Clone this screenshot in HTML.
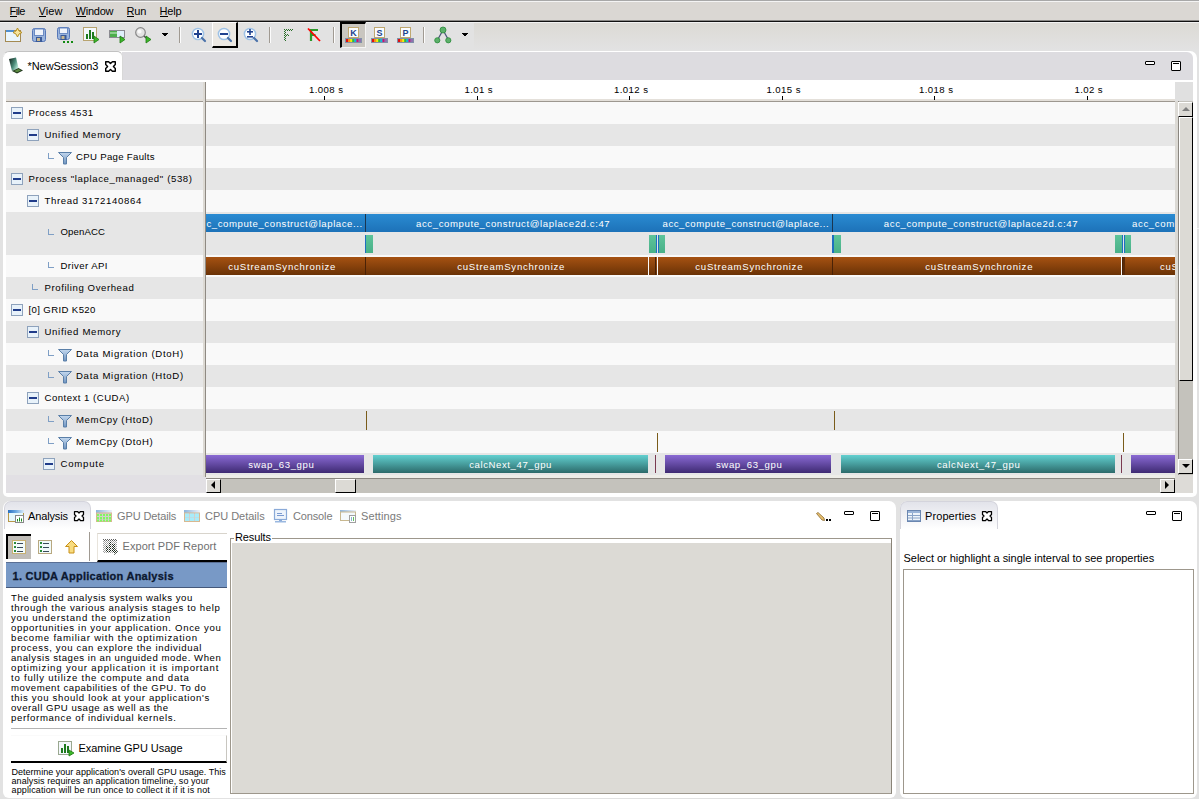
<!DOCTYPE html><html><head><meta charset="utf-8"><title>NVIDIA Visual Profiler</title><style>
*{margin:0;padding:0;box-sizing:border-box}
html,body{width:1199px;height:799px;overflow:hidden;background:#e2e2e2;font-family:"Liberation Sans",sans-serif;font-size:11px;color:#000}
div{position:absolute}
.t{white-space:pre;line-height:20px;height:20px}
svg{position:absolute;overflow:visible}
</style></head><body>
<div style="left:0px;top:0px;width:1199px;height:21px;background:#dad7d3"></div>
<div style="left:0px;top:0px;width:1199px;height:1px;background:#a8a8a8"></div>
<div style="left:0px;top:1px;width:1199px;height:1px;background:#f4f4f4"></div>
<div style="left:0px;top:20px;width:1199px;height:1px;background:#8a8886"></div>
<div style="left:0px;top:21px;width:1199px;height:1px;background:#111"></div>
<div class="t" style="left:9.50px;top:1px;font-size:11px;font-weight:400;letter-spacing:-0.578px;color:#000;">File</div>
<div class="t" style="left:38.50px;top:1px;font-size:11px;font-weight:400;letter-spacing:0.115px;color:#000;">View</div>
<div class="t" style="left:75.50px;top:1px;font-size:11px;font-weight:400;letter-spacing:-0.225px;color:#000;">Window</div>
<div class="t" style="left:126.50px;top:1px;font-size:11px;font-weight:400;letter-spacing:-0.094px;color:#000;">Run</div>
<div class="t" style="left:159.50px;top:1px;font-size:11px;font-weight:400;letter-spacing:-0.208px;color:#000;">Help</div>
<div style="left:10px;top:16px;width:7px;height:1px;background:#000"></div>
<div style="left:39px;top:16px;width:7px;height:1px;background:#000"></div>
<div style="left:76px;top:16px;width:10px;height:1px;background:#000"></div>
<div style="left:127px;top:16px;width:7px;height:1px;background:#000"></div>
<div style="left:160px;top:16px;width:8px;height:1px;background:#000"></div>
<div style="left:0px;top:22px;width:1199px;height:1px;background:#f2f2f2"></div>
<div style="left:0px;top:23px;width:1199px;height:27px;background:#e2e2e2"></div>
<div style="left:474px;top:23px;width:725px;height:27px;background:linear-gradient(#dcdad5,#e2e2e2)"></div>
<svg style="left:5px;top:28px;" width="17" height="15" viewBox="0 0 17 15">
<rect x="0.5" y="2.5" width="15" height="11" fill="#eaf6fc" stroke="#a48a52"/>
<rect x="1" y="2" width="8" height="2" fill="#4f8fd0"/>
<path d="M12.5 0 L14 3 L17 4.5 L14 6 L12.5 9 L11 6 L8 4.5 L11 3 Z" fill="#f6e6a0" stroke="#b89020" stroke-width="1"/>
</svg>
<svg style="left:32px;top:28px;" width="15" height="15" viewBox="0 0 15 15">
<rect x="0.5" y="0.5" width="13" height="13" rx="2" fill="#9ab4dc" stroke="#5577b8"/>
<rect x="2.5" y="1" width="9" height="6.5" fill="#f0f4fb" stroke="#6d8cc4"/>
<rect x="4" y="9" width="6" height="5" fill="#3a5a98"/>
<rect x="5" y="10" width="3" height="3" fill="#c8b890"/>
</svg>
<svg style="left:57px;top:27px;" width="17" height="17" viewBox="0 0 17 17">
<rect x="0.5" y="0.5" width="12" height="12" rx="2" fill="#9ab4dc" stroke="#5577b8"/>
<rect x="2.5" y="1" width="8" height="5.5" fill="#f0f4fb" stroke="#6d8cc4"/>
<rect x="3.5" y="8" width="6" height="5" fill="#3a5a98"/>
<rect x="4.5" y="9" width="3" height="3" fill="#c8b890"/>
<rect x="6" y="14" width="2" height="2" fill="#138a13"/><rect x="10" y="14" width="2" height="2" fill="#138a13"/><rect x="14" y="14" width="2" height="2" fill="#138a13"/>
</svg>
<svg style="left:83px;top:27px;" width="17" height="17" viewBox="0 0 17 17">
<rect x="0.5" y="0.5" width="13" height="13" fill="#f4f8fc" stroke="#b8a470"/>
<rect x="3" y="7" width="2" height="5" fill="#1e7a1e"/><rect x="6" y="3" width="2" height="9" fill="#1e7a1e"/><rect x="9" y="5" width="2" height="7" fill="#1e7a1e"/>
<path d="M11 9 L16 12.5 L11 16 Z" fill="#3cb82a" stroke="#1f7a12" stroke-width="0.8"/></svg>
<svg style="left:109px;top:30px;" width="17" height="14" viewBox="0 0 17 14">
<rect x="0.5" y="0.5" width="15" height="7" fill="#dff0fa" stroke="#8a8a90"/>
<rect x="1" y="1" width="7" height="6" fill="#4cae4c"/>
<rect x="1" y="2" width="7" height="2" fill="#8fd08f"/>
<path d="M11 6 L16 9.5 L11 13 Z" fill="#3cb82a" stroke="#1f7a12" stroke-width="0.8"/></svg>
<svg style="left:135px;top:27px;" width="17" height="17" viewBox="0 0 17 17">
<circle cx="5.5" cy="5.5" r="4.8" fill="#e4e4e4" stroke="#888" stroke-width="1.2"/>
<circle cx="4.5" cy="4.5" r="2" fill="#fafafa"/>
<path d="M9 9 L11 11" stroke="#555" stroke-width="1.5"/>
<path d="M11 9 L16 12.5 L11 16 Z" fill="#3cb82a" stroke="#1f7a12" stroke-width="0.8"/></svg>
<div style="left:162px;top:33px;width:6px;height:1px;background:#000"></div>
<div style="left:163px;top:34px;width:4px;height:1px;background:#000"></div>
<div style="left:164px;top:35px;width:2px;height:1px;background:#000"></div>
<div style="left:179px;top:27px;width:1px;height:16px;background:#a09a92"></div>
<div style="left:180px;top:27px;width:1px;height:16px;background:#fcfcfc"></div>
<svg style="left:191px;top:27px;" width="16" height="16" viewBox="0 0 16 16"><circle cx="7" cy="7" r="5.6" fill="#fdfeff" stroke="#9ec2e6" stroke-width="1.5"/><path d="M11 11 L14 14" stroke="#4a72aa" stroke-width="2.2" stroke-linecap="round"/><rect x="3" y="6" width="8" height="2" fill="#1f4290"/><rect x="6" y="3" width="2" height="8" fill="#1f4290"/></svg>
<div style="left:212px;top:22px;width:26px;height:26px;background:#ebe8e3;border-top:1px solid #fff;border-left:1px solid #fff;border-right:2px solid #000;border-bottom:2px solid #000"></div>
<svg style="left:217px;top:27px;" width="16" height="16" viewBox="0 0 16 16"><circle cx="7" cy="7" r="5.6" fill="#fdfeff" stroke="#9ec2e6" stroke-width="1.5"/><path d="M11 11 L14 14" stroke="#4a72aa" stroke-width="2.2" stroke-linecap="round"/><rect x="3" y="6" width="8" height="2" fill="#1f4290"/></svg>
<svg style="left:243px;top:27px;" width="16" height="16" viewBox="0 0 16 16"><circle cx="7" cy="7" r="5.6" fill="#fdfeff" stroke="#9ec2e6" stroke-width="1.5"/><path d="M11 11 L14 14" stroke="#4a72aa" stroke-width="2.2" stroke-linecap="round"/><rect x="4" y="4" width="6" height="1.6" fill="#1f4290"/><rect x="6.2" y="2" width="1.6" height="6" fill="#1f4290"/><rect x="4" y="9" width="6" height="1.6" fill="#1f4290"/></svg>
<div style="left:269px;top:27px;width:1px;height:16px;background:#a09a92"></div>
<div style="left:270px;top:27px;width:1px;height:16px;background:#fcfcfc"></div>
<svg style="left:283px;top:28px;" width="12" height="14" viewBox="0 0 12 14"><g fill="#2a6e2a"><rect x="1" y="1" width="1" height="1"/><rect x="3" y="1" width="1" height="1"/><rect x="5" y="1" width="1" height="1"/><rect x="7" y="1" width="1" height="1"/><rect x="9" y="1" width="1" height="1"/><rect x="2" y="2" width="1" height="1"/><rect x="4" y="2" width="1" height="1"/><rect x="6" y="2" width="1" height="1"/><rect x="8" y="2" width="1" height="1"/><rect x="1" y="3" width="1" height="1"/><rect x="2" y="4" width="1" height="1"/><rect x="1" y="5" width="1" height="1"/><rect x="2" y="6" width="1" height="1"/><rect x="4" y="6" width="1" height="1"/><rect x="1" y="7" width="1" height="1"/><rect x="3" y="7" width="1" height="1"/><rect x="5" y="7" width="1" height="1"/><rect x="2" y="8" width="1" height="1"/><rect x="1" y="9" width="1" height="1"/><rect x="2" y="10" width="1" height="1"/><rect x="1" y="11" width="1" height="1"/><rect x="2" y="12" width="1" height="1"/></g></svg>
<svg style="left:307px;top:28px;" width="14" height="14" viewBox="0 0 14 14">
<path d="M4 13 V2 H11 M4 7 H8.5" stroke="#2a9a2a" stroke-width="2.2" fill="none"/>
<path d="M1 0.5 L13 13" stroke="#ff0000" stroke-width="1.8"/>
</svg>
<div style="left:333px;top:27px;width:1px;height:16px;background:#a09a92"></div>
<div style="left:334px;top:27px;width:1px;height:16px;background:#fcfcfc"></div>
<div style="left:340px;top:22px;width:26px;height:26px;background:#c9c6c0;border-top:2px solid #000;border-left:2px solid #000;border-right:1px solid #f4f4f4;border-bottom:1px solid #f4f4f4"></div>
<svg style="left:345px;top:27px;" width="17" height="16" viewBox="0 0 17 16">
<rect x="3.5" y="0.5" width="10" height="10" fill="#fafcff" stroke="#c0a870"/>
<text x="8.5" y="8.6" font-family="Liberation Sans" font-weight="bold" font-size="9" fill="#23438c" text-anchor="middle">K</text>
<rect x="0.5" y="11.5" width="16" height="4" fill="#7f8fb0" stroke="#8090a8"/>
<rect x="1" y="12" width="2.1" height="3" fill="#e01010"/><rect x="3.1" y="12" width="2.1" height="3" fill="#ff9010"/><rect x="5.2" y="12" width="2.1" height="3" fill="#f8f000"/><rect x="7.3" y="12" width="2.1" height="3" fill="#30c030"/><rect x="9.4" y="12" width="2.1" height="3" fill="#10b8e0"/><rect x="11.5" y="12" width="2.1" height="3" fill="#d01070"/><rect x="13.6" y="12" width="2.4" height="3" fill="#9070b0"/>
</svg>
<svg style="left:371px;top:27px;" width="17" height="16" viewBox="0 0 17 16">
<rect x="3.5" y="0.5" width="10" height="10" fill="#fafcff" stroke="#c0a870"/>
<text x="8.5" y="8.6" font-family="Liberation Sans" font-weight="bold" font-size="9" fill="#23438c" text-anchor="middle">S</text>
<rect x="0.5" y="11.5" width="16" height="4" fill="#7f8fb0" stroke="#8090a8"/>
<rect x="1" y="12" width="2.1" height="3" fill="#e01010"/><rect x="3.1" y="12" width="2.1" height="3" fill="#ff9010"/><rect x="5.2" y="12" width="2.1" height="3" fill="#f8f000"/><rect x="7.3" y="12" width="2.1" height="3" fill="#30c030"/><rect x="9.4" y="12" width="2.1" height="3" fill="#10b8e0"/><rect x="11.5" y="12" width="2.1" height="3" fill="#d01070"/><rect x="13.6" y="12" width="2.4" height="3" fill="#9070b0"/>
</svg>
<svg style="left:397px;top:27px;" width="17" height="16" viewBox="0 0 17 16">
<rect x="3.5" y="0.5" width="10" height="10" fill="#fafcff" stroke="#c0a870"/>
<text x="8.5" y="8.6" font-family="Liberation Sans" font-weight="bold" font-size="9" fill="#23438c" text-anchor="middle">P</text>
<rect x="0.5" y="11.5" width="16" height="4" fill="#7f8fb0" stroke="#8090a8"/>
<rect x="1" y="12" width="2.1" height="3" fill="#e01010"/><rect x="3.1" y="12" width="2.1" height="3" fill="#ff9010"/><rect x="5.2" y="12" width="2.1" height="3" fill="#f8f000"/><rect x="7.3" y="12" width="2.1" height="3" fill="#30c030"/><rect x="9.4" y="12" width="2.1" height="3" fill="#10b8e0"/><rect x="11.5" y="12" width="2.1" height="3" fill="#d01070"/><rect x="13.6" y="12" width="2.4" height="3" fill="#9070b0"/>
</svg>
<div style="left:423px;top:27px;width:1px;height:16px;background:#a09a92"></div>
<div style="left:424px;top:27px;width:1px;height:16px;background:#fcfcfc"></div>
<svg style="left:434px;top:26px;" width="18" height="18" viewBox="0 0 18 18">
<path d="M9 4 L3.5 14 M9 4 L14.5 14" stroke="#4a5a78" stroke-width="1.3"/>
<circle cx="9" cy="4" r="3" fill="#5cb06a" stroke="#2a8a3a" stroke-width="0.8"/>
<circle cx="3.3" cy="14.3" r="2.6" fill="#5cb06a" stroke="#2a8a3a" stroke-width="0.8"/>
<circle cx="14.3" cy="14.3" r="2.6" fill="#5cb06a" stroke="#2a8a3a" stroke-width="0.8"/>
</svg>
<div style="left:462px;top:33px;width:6px;height:1px;background:#000"></div>
<div style="left:463px;top:34px;width:4px;height:1px;background:#000"></div>
<div style="left:464px;top:35px;width:2px;height:1px;background:#000"></div>
<div style="left:3px;top:51px;width:1194px;height:446px;background:#ffffff;border-radius:7px 7px 5px 5px"></div>
<div style="left:122px;top:52px;width:1071px;height:28px;background:#dddce0;border-radius:0 6px 0 0"></div>
<div style="left:3px;top:51px;width:119px;height:6px;border-top:1px solid #c2c2c2;border-left:1px solid #e8e8e8;border-radius:7px 6px 0 0"></div>
<div style="left:116px;top:51px;width:7px;height:29px;background:#fff;border-top:1px solid #c2c2c2;border-right:1px solid #d8d8d8;border-radius:0 6px 0 0"></div>
<svg style="left:8px;top:56px;" width="16" height="18" viewBox="0 0 16 18">
<defs><linearGradient id="lg1" x1="0" y1="0" x2="1" y2="0.6"><stop offset="0" stop-color="#0e1a14"/><stop offset="0.6" stop-color="#4a8a78"/><stop offset="1" stop-color="#b8e8d8"/></linearGradient></defs>
<path d="M1 3 L8 1.5 L10.5 12 L4 15 Z" fill="url(#lg1)"/>
<path d="M4 15 L10.5 12 L15 14.5 L9 17.5 Z" fill="#23381f"/>
<path d="M6 15 L10.5 13 L13 14.5 L9 16.2 Z" fill="#5a8a40"/>
</svg>
<div class="t" style="left:27.50px;top:56px;font-size:11px;font-weight:400;letter-spacing:-0.050px;color:#000;">*NewSession3</div>
<svg style="left:105px;top:61px;" width="11" height="11" viewBox="0 0 11 11"><path d="M0.7 0.7 H3.6 L5.5 2.6 L7.4 0.7 H10.3 V3.6 L8.4 5.5 L10.3 7.4 V10.3 H7.4 L5.5 8.4 L3.6 10.3 H0.7 V7.4 L2.6 5.5 L0.7 3.6 Z" fill="#fff" stroke="#000" stroke-width="1.4" stroke-linejoin="round"/></svg>
<div style="left:1145px;top:61px;width:10px;height:4px;background:#fff;border:1px solid #000;border-radius:1px"></div>
<div style="left:1171px;top:61px;width:10px;height:10px;background:#fff;border:1px solid #000;border-radius:1px"></div>
<div style="left:1173px;top:63px;width:6px;height:1px;background:#000"></div>
<div style="left:6px;top:82px;width:197px;height:19px;background:#e2e2e2"></div>
<div style="left:206px;top:80px;width:969px;height:20px;background:#ffffff"></div>
<div style="left:6px;top:99px;width:1169px;height:2px;background:#e4e0da"></div>
<div style="left:6px;top:101px;width:1169px;height:1px;background:#9d9890"></div>
<div style="left:6px;top:475px;width:200px;height:18px;background:#e2e0e4"></div>
<div style="left:203px;top:82px;width:2px;height:395px;background:#dcd9d3"></div>
<div style="left:205px;top:82px;width:1px;height:395px;background:#8f8a83"></div>
<div class="t" style="left:309.00px;top:80px;font-size:9.6px;font-weight:400;letter-spacing:0.419px;color:#000;">1.008 s</div>
<div style="left:324px;top:96px;width:1px;height:4px;background:#000"></div>
<div class="t" style="left:464.50px;top:80px;font-size:9.6px;font-weight:400;letter-spacing:0.372px;color:#000;">1.01 s</div>
<div style="left:477px;top:96px;width:1px;height:4px;background:#000"></div>
<div class="t" style="left:614.00px;top:80px;font-size:9.6px;font-weight:400;letter-spacing:0.419px;color:#000;">1.012 s</div>
<div style="left:629px;top:96px;width:1px;height:4px;background:#000"></div>
<div class="t" style="left:766.50px;top:80px;font-size:9.6px;font-weight:400;letter-spacing:0.419px;color:#000;">1.015 s</div>
<div style="left:782px;top:96px;width:1px;height:4px;background:#000"></div>
<div class="t" style="left:919.00px;top:80px;font-size:9.6px;font-weight:400;letter-spacing:0.419px;color:#000;">1.018 s</div>
<div style="left:934px;top:96px;width:1px;height:4px;background:#000"></div>
<div class="t" style="left:1074.50px;top:80px;font-size:9.6px;font-weight:400;letter-spacing:0.372px;color:#000;">1.02 s</div>
<div style="left:1087px;top:96px;width:1px;height:4px;background:#000"></div>
<div style="left:6px;top:102px;width:197px;height:22px;background:#f9f9f9"></div>
<div style="left:206px;top:102px;width:969px;height:22px;background:#f9f9f9"></div>
<div style="left:11px;top:107px;width:12px;height:12px;background:#e8f2fa;border:1px solid #8ea2bc"></div>
<div style="left:13px;top:112px;width:8px;height:2px;background:#203c8a"></div>
<div class="t" style="left:28.50px;top:103px;font-size:9.6px;font-weight:400;letter-spacing:0.548px;color:#000;">Process 4531</div>
<div style="left:6px;top:124px;width:197px;height:22px;background:#e6e6e6"></div>
<div style="left:206px;top:124px;width:969px;height:22px;background:#e6e6e6"></div>
<div style="left:27px;top:129px;width:12px;height:12px;background:#e8f2fa;border:1px solid #8ea2bc"></div>
<div style="left:29px;top:134px;width:8px;height:2px;background:#203c8a"></div>
<div class="t" style="left:44.50px;top:125px;font-size:9.6px;font-weight:400;letter-spacing:0.678px;color:#000;">Unified Memory</div>
<div style="left:6px;top:146px;width:197px;height:22px;background:#f9f9f9"></div>
<div style="left:206px;top:146px;width:969px;height:22px;background:#f9f9f9"></div>
<div style="left:48px;top:153px;width:1px;height:6px;background:#7f9fc5"></div>
<div style="left:48px;top:158px;width:6px;height:1px;background:#7f9fc5"></div>
<svg style="left:58px;top:152px;" width="15" height="13" viewBox="0 0 15 13"><defs><linearGradient id="fg" x1="0" y1="0" x2="0" y2="1"><stop offset="0" stop-color="#c4d8ee"/><stop offset="1" stop-color="#6f94c0"/></linearGradient></defs><path d="M0.5 0.5h13l-5 5v6.5h-3v-6.5z" fill="url(#fg)" stroke="#5a7fa8" stroke-width="1"/></svg>
<div class="t" style="left:76.00px;top:147px;font-size:9.6px;font-weight:400;letter-spacing:0.320px;color:#000;">CPU Page Faults</div>
<div style="left:6px;top:168px;width:197px;height:22px;background:#e6e6e6"></div>
<div style="left:206px;top:168px;width:969px;height:22px;background:#e6e6e6"></div>
<div style="left:11px;top:173px;width:12px;height:12px;background:#e8f2fa;border:1px solid #8ea2bc"></div>
<div style="left:13px;top:178px;width:8px;height:2px;background:#203c8a"></div>
<div class="t" style="left:28.50px;top:169px;font-size:9.6px;font-weight:400;letter-spacing:0.619px;color:#000;">Process &quot;laplace_managed&quot; (538)</div>
<div style="left:6px;top:190px;width:197px;height:22px;background:#f9f9f9"></div>
<div style="left:206px;top:190px;width:969px;height:22px;background:#f9f9f9"></div>
<div style="left:27px;top:195px;width:12px;height:12px;background:#e8f2fa;border:1px solid #8ea2bc"></div>
<div style="left:29px;top:200px;width:8px;height:2px;background:#203c8a"></div>
<div class="t" style="left:44.50px;top:191px;font-size:9.6px;font-weight:400;letter-spacing:0.649px;color:#000;">Thread 3172140864</div>
<div style="left:6px;top:212px;width:197px;height:43px;background:#e6e6e6"></div>
<div style="left:206px;top:212px;width:969px;height:43px;background:#e6e6e6"></div>
<div style="left:48px;top:229px;width:1px;height:6px;background:#7f9fc5"></div>
<div style="left:48px;top:234px;width:6px;height:1px;background:#7f9fc5"></div>
<div class="t" style="left:60.50px;top:222px;font-size:9.6px;font-weight:400;letter-spacing:0.111px;color:#000;">OpenACC</div>
<div style="left:6px;top:255px;width:197px;height:22px;background:#f9f9f9"></div>
<div style="left:206px;top:255px;width:969px;height:22px;background:#f9f9f9"></div>
<div style="left:48px;top:262px;width:1px;height:6px;background:#7f9fc5"></div>
<div style="left:48px;top:267px;width:6px;height:1px;background:#7f9fc5"></div>
<div class="t" style="left:60.50px;top:256px;font-size:9.6px;font-weight:400;letter-spacing:0.424px;color:#000;">Driver API</div>
<div style="left:6px;top:277px;width:197px;height:22px;background:#e6e6e6"></div>
<div style="left:206px;top:277px;width:969px;height:22px;background:#e6e6e6"></div>
<div style="left:32px;top:284px;width:1px;height:6px;background:#7f9fc5"></div>
<div style="left:32px;top:289px;width:6px;height:1px;background:#7f9fc5"></div>
<div class="t" style="left:44.50px;top:278px;font-size:9.6px;font-weight:400;letter-spacing:0.578px;color:#000;">Profiling Overhead</div>
<div style="left:6px;top:299px;width:197px;height:22px;background:#f9f9f9"></div>
<div style="left:206px;top:299px;width:969px;height:22px;background:#f9f9f9"></div>
<div style="left:11px;top:304px;width:12px;height:12px;background:#e8f2fa;border:1px solid #8ea2bc"></div>
<div style="left:13px;top:309px;width:8px;height:2px;background:#203c8a"></div>
<div class="t" style="left:28.50px;top:300px;font-size:9.6px;font-weight:400;letter-spacing:0.376px;color:#000;">[0] GRID K520</div>
<div style="left:6px;top:321px;width:197px;height:22px;background:#e6e6e6"></div>
<div style="left:206px;top:321px;width:969px;height:22px;background:#e6e6e6"></div>
<div style="left:27px;top:326px;width:12px;height:12px;background:#e8f2fa;border:1px solid #8ea2bc"></div>
<div style="left:29px;top:331px;width:8px;height:2px;background:#203c8a"></div>
<div class="t" style="left:44.50px;top:322px;font-size:9.6px;font-weight:400;letter-spacing:0.678px;color:#000;">Unified Memory</div>
<div style="left:6px;top:343px;width:197px;height:22px;background:#f9f9f9"></div>
<div style="left:206px;top:343px;width:969px;height:22px;background:#f9f9f9"></div>
<div style="left:48px;top:350px;width:1px;height:6px;background:#7f9fc5"></div>
<div style="left:48px;top:355px;width:6px;height:1px;background:#7f9fc5"></div>
<svg style="left:58px;top:349px;" width="15" height="13" viewBox="0 0 15 13"><defs><linearGradient id="fg" x1="0" y1="0" x2="0" y2="1"><stop offset="0" stop-color="#c4d8ee"/><stop offset="1" stop-color="#6f94c0"/></linearGradient></defs><path d="M0.5 0.5h13l-5 5v6.5h-3v-6.5z" fill="url(#fg)" stroke="#5a7fa8" stroke-width="1"/></svg>
<div class="t" style="left:76.00px;top:344px;font-size:9.6px;font-weight:400;letter-spacing:0.694px;color:#000;">Data Migration (DtoH)</div>
<div style="left:6px;top:365px;width:197px;height:22px;background:#e6e6e6"></div>
<div style="left:206px;top:365px;width:969px;height:22px;background:#e6e6e6"></div>
<div style="left:48px;top:372px;width:1px;height:6px;background:#7f9fc5"></div>
<div style="left:48px;top:377px;width:6px;height:1px;background:#7f9fc5"></div>
<svg style="left:58px;top:371px;" width="15" height="13" viewBox="0 0 15 13"><defs><linearGradient id="fg" x1="0" y1="0" x2="0" y2="1"><stop offset="0" stop-color="#c4d8ee"/><stop offset="1" stop-color="#6f94c0"/></linearGradient></defs><path d="M0.5 0.5h13l-5 5v6.5h-3v-6.5z" fill="url(#fg)" stroke="#5a7fa8" stroke-width="1"/></svg>
<div class="t" style="left:76.00px;top:366px;font-size:9.6px;font-weight:400;letter-spacing:0.694px;color:#000;">Data Migration (HtoD)</div>
<div style="left:6px;top:387px;width:197px;height:22px;background:#f9f9f9"></div>
<div style="left:206px;top:387px;width:969px;height:22px;background:#f9f9f9"></div>
<div style="left:27px;top:392px;width:12px;height:12px;background:#e8f2fa;border:1px solid #8ea2bc"></div>
<div style="left:29px;top:397px;width:8px;height:2px;background:#203c8a"></div>
<div class="t" style="left:44.50px;top:388px;font-size:9.6px;font-weight:400;letter-spacing:0.486px;color:#000;">Context 1 (CUDA)</div>
<div style="left:6px;top:409px;width:197px;height:22px;background:#e6e6e6"></div>
<div style="left:206px;top:409px;width:969px;height:22px;background:#e6e6e6"></div>
<div style="left:48px;top:416px;width:1px;height:6px;background:#7f9fc5"></div>
<div style="left:48px;top:421px;width:6px;height:1px;background:#7f9fc5"></div>
<svg style="left:58px;top:415px;" width="15" height="13" viewBox="0 0 15 13"><defs><linearGradient id="fg" x1="0" y1="0" x2="0" y2="1"><stop offset="0" stop-color="#c4d8ee"/><stop offset="1" stop-color="#6f94c0"/></linearGradient></defs><path d="M0.5 0.5h13l-5 5v6.5h-3v-6.5z" fill="url(#fg)" stroke="#5a7fa8" stroke-width="1"/></svg>
<div class="t" style="left:76.00px;top:410px;font-size:9.6px;font-weight:400;letter-spacing:0.617px;color:#000;">MemCpy (HtoD)</div>
<div style="left:6px;top:431px;width:197px;height:22px;background:#f9f9f9"></div>
<div style="left:206px;top:431px;width:969px;height:22px;background:#f9f9f9"></div>
<div style="left:48px;top:438px;width:1px;height:6px;background:#7f9fc5"></div>
<div style="left:48px;top:443px;width:6px;height:1px;background:#7f9fc5"></div>
<svg style="left:58px;top:437px;" width="15" height="13" viewBox="0 0 15 13"><defs><linearGradient id="fg" x1="0" y1="0" x2="0" y2="1"><stop offset="0" stop-color="#c4d8ee"/><stop offset="1" stop-color="#6f94c0"/></linearGradient></defs><path d="M0.5 0.5h13l-5 5v6.5h-3v-6.5z" fill="url(#fg)" stroke="#5a7fa8" stroke-width="1"/></svg>
<div class="t" style="left:76.00px;top:432px;font-size:9.6px;font-weight:400;letter-spacing:0.617px;color:#000;">MemCpy (DtoH)</div>
<div style="left:6px;top:453px;width:197px;height:22px;background:#e6e6e6"></div>
<div style="left:206px;top:453px;width:969px;height:22px;background:#e6e6e6"></div>
<div style="left:43px;top:458px;width:12px;height:12px;background:#e8f2fa;border:1px solid #8ea2bc"></div>
<div style="left:45px;top:463px;width:8px;height:2px;background:#203c8a"></div>
<div class="t" style="left:60.50px;top:454px;font-size:9.6px;font-weight:400;letter-spacing:0.760px;color:#000;">Compute</div>
<div style="left:206px;top:214px;width:969px;height:18px;background:linear-gradient(#2a8bd2,#1d72b8)"></div>
<div style="left:365px;top:214px;width:1px;height:18px;background:#1a3550"></div>
<div style="left:832px;top:214px;width:1px;height:18px;background:#1a3550"></div>
<div class="t" style="left:206.50px;top:214px;font-size:9.6px;font-weight:400;letter-spacing:0.561px;color:#fff;">c_compute_construct@laplace...</div>
<div class="t" style="left:416.00px;top:214px;font-size:9.6px;font-weight:400;letter-spacing:0.593px;color:#fff;">acc_compute_construct@laplace2d.c:47</div>
<div class="t" style="left:662.50px;top:214px;font-size:9.6px;font-weight:400;letter-spacing:0.540px;color:#fff;">acc_compute_construct@laplace...</div>
<div class="t" style="left:883.85px;top:214px;font-size:9.6px;font-weight:400;letter-spacing:0.593px;color:#fff;">acc_compute_construct@laplace2d.c:47</div>
<div class="t" style="left:1132.00px;top:214px;font-size:9.6px;font-weight:400;letter-spacing:0.634px;color:#fff;">acc_compute_construct</div>
<div style="left:365px;top:235px;width:8px;height:18px;background:linear-gradient(#5ec49a,#48b088)"></div>
<div style="left:649px;top:235px;width:7px;height:18px;background:linear-gradient(#5ec49a,#48b088)"></div>
<div style="left:659px;top:235px;width:6px;height:18px;background:linear-gradient(#5ec49a,#48b088)"></div>
<div style="left:832px;top:235px;width:9px;height:18px;background:linear-gradient(#5ec49a,#48b088)"></div>
<div style="left:1115px;top:235px;width:8px;height:18px;background:linear-gradient(#5ec49a,#48b088)"></div>
<div style="left:1125px;top:235px;width:6px;height:18px;background:linear-gradient(#5ec49a,#48b088)"></div>
<div style="left:365px;top:235px;width:1px;height:18px;background:#1f6fc0"></div>
<div style="left:656px;top:235px;width:1px;height:18px;background:#1f6fc0"></div>
<div style="left:658px;top:235px;width:1px;height:18px;background:#1f6fc0"></div>
<div style="left:832px;top:235px;width:2px;height:18px;background:#1f6fc0"></div>
<div style="left:1122px;top:235px;width:1px;height:18px;background:#1f6fc0"></div>
<div style="left:1124px;top:235px;width:1px;height:18px;background:#1f6fc0"></div>
<div style="left:206px;top:257px;width:442px;height:18px;background:linear-gradient(#a65212,#6a3206)"></div>
<div style="left:649px;top:257px;width:8px;height:18px;background:linear-gradient(#a65212,#6a3206)"></div>
<div style="left:658px;top:257px;width:463px;height:18px;background:linear-gradient(#a65212,#6a3206)"></div>
<div style="left:1122px;top:257px;width:53px;height:18px;background:linear-gradient(#a65212,#6a3206)"></div>
<div style="left:365px;top:257px;width:1px;height:18px;background:#4a2206"></div>
<div style="left:655px;top:257px;width:1px;height:18px;background:#4a2206"></div>
<div style="left:832px;top:257px;width:1px;height:18px;background:#4a2206"></div>
<div style="left:1122px;top:257px;width:1px;height:18px;background:#4a2206"></div>
<div style="left:1123px;top:257px;width:2px;height:18px;background:#5a2a08"></div>
<div class="t" style="left:228.25px;top:257px;font-size:9.6px;font-weight:400;letter-spacing:0.741px;color:#fff;">cuStreamSynchronize</div>
<div class="t" style="left:457.25px;top:257px;font-size:9.6px;font-weight:400;letter-spacing:0.741px;color:#fff;">cuStreamSynchronize</div>
<div class="t" style="left:695.30px;top:257px;font-size:9.6px;font-weight:400;letter-spacing:0.741px;color:#fff;">cuStreamSynchronize</div>
<div class="t" style="left:925.30px;top:257px;font-size:9.6px;font-weight:400;letter-spacing:0.741px;color:#fff;">cuStreamSynchronize</div>
<div class="t" style="left:1160.00px;top:257px;font-size:9.6px;font-weight:400;letter-spacing:0.741px;color:#fff;">cuStreamSynchronize</div>
<div style="left:366px;top:411px;width:1px;height:19px;background:#7a5c1a"></div>
<div style="left:834px;top:411px;width:1px;height:19px;background:#7a5c1a"></div>
<div style="left:657px;top:433px;width:1px;height:19px;background:#7a5c1a"></div>
<div style="left:1123px;top:433px;width:1px;height:19px;background:#7a5c1a"></div>
<div style="left:206px;top:455px;width:158px;height:18px;background:linear-gradient(#8a6ad4,#3e2a72)"></div>
<div style="left:373px;top:455px;width:275px;height:18px;background:linear-gradient(#62d0d0,#2c6a6a)"></div>
<div style="left:665px;top:455px;width:166px;height:18px;background:linear-gradient(#8a6ad4,#3e2a72)"></div>
<div style="left:841px;top:455px;width:274px;height:18px;background:linear-gradient(#62d0d0,#2c6a6a)"></div>
<div style="left:1131px;top:455px;width:44px;height:18px;background:linear-gradient(#8a6ad4,#3e2a72)"></div>
<div style="left:655px;top:455px;width:1px;height:18px;background:#7a3a50"></div>
<div style="left:1121px;top:455px;width:1px;height:18px;background:#7a3a50"></div>
<div class="t" style="left:248.20px;top:455px;font-size:9.6px;font-weight:400;letter-spacing:0.585px;color:#fff;">swap_63_gpu</div>
<div class="t" style="left:469.15px;top:455px;font-size:9.6px;font-weight:400;letter-spacing:0.583px;color:#fff;">calcNext_47_gpu</div>
<div class="t" style="left:715.95px;top:455px;font-size:9.6px;font-weight:400;letter-spacing:0.615px;color:#fff;">swap_63_gpu</div>
<div class="t" style="left:936.95px;top:455px;font-size:9.6px;font-weight:400;letter-spacing:0.626px;color:#fff;">calcNext_47_gpu</div>
<div style="left:206px;top:475px;width:969px;height:3px;background:#eeede8"></div>
<div style="left:1175px;top:82px;width:18px;height:19px;background:#e0e0e0"></div>
<div style="left:1175px;top:101px;width:3px;height:377px;background:#dcdad5"></div>
<div style="left:1178px;top:101px;width:1px;height:374px;background:#8a8680"></div>
<div style="left:1179px;top:101px;width:14px;height:374px;background:#c4c2bc"></div>
<div style="left:1178px;top:102px;width:15px;height:15px;background:#dcdad5;border-top:1px solid #fff;border-left:1px solid #fff;border-right:1px solid #000;border-bottom:1px solid #000"></div>
<svg style="left:1182px;top:107px;" width="8" height="4" viewBox="0 0 8 4"><path d="M0 4 L4 0 L8 4 Z" fill="#808080"/></svg>
<div style="left:1179px;top:117px;width:14px;height:264px;background:#dcdad5;border-left:1px solid #fff;border-top:1px solid #fff;border-right:1px solid #000;border-bottom:1px solid #000"></div>
<div style="left:1178px;top:459px;width:15px;height:15px;background:#dcdad5;border-top:1px solid #fff;border-left:1px solid #fff;border-right:1px solid #000;border-bottom:1px solid #000"></div>
<svg style="left:1182px;top:464px;" width="8" height="4" viewBox="0 0 8 4"><path d="M0 0 L8 0 L4 4 Z" fill="#000"/></svg>
<div style="left:1175px;top:475px;width:18px;height:18px;background:#dddbd7"></div>
<div style="left:206px;top:478px;width:969px;height:15px;background:#c4c2bc"></div>
<div style="left:206px;top:478px;width:969px;height:1px;background:#8a8680"></div>
<div style="left:206px;top:479px;width:15px;height:14px;background:#dcdad5;border-top:1px solid #fff;border-left:1px solid #fff;border-right:1px solid #000;border-bottom:1px solid #000"></div>
<svg style="left:211px;top:481px;" width="4" height="8" viewBox="0 0 4 8"><path d="M4 0 L0 4 L4 8 Z" fill="#000"/></svg>
<div style="left:335px;top:479px;width:21px;height:14px;background:#dcdad5;border-top:1px solid #fff;border-left:1px solid #fff;border-right:1px solid #000;border-bottom:1px solid #000"></div>
<div style="left:1160px;top:479px;width:15px;height:14px;background:#dcdad5;border-top:1px solid #fff;border-left:1px solid #fff;border-right:1px solid #000;border-bottom:1px solid #000"></div>
<svg style="left:1165px;top:481px;" width="4" height="8" viewBox="0 0 4 8"><path d="M0 0 L4 4 L0 8 Z" fill="#000"/></svg>
<div style="left:3px;top:501px;width:893px;height:297px;background:#fff;border-radius:7px 7px 6px 6px"></div>
<div style="left:4px;top:501px;width:87px;height:28px;background:linear-gradient(#e2e3ea,#ffffff);border-radius:7px 7px 0 0;border:1px solid #d4d4dc;border-bottom:none"></div>
<svg style="left:8px;top:510px;" width="17" height="13" viewBox="0 0 17 13">
<defs><linearGradient id="ab" x1="0" y1="0" x2="1" y2="0"><stop offset="0" stop-color="#2a70c0"/><stop offset="0.5" stop-color="#6aa8e0"/><stop offset="1" stop-color="#dceaf8"/></linearGradient></defs>
<rect x="0.5" y="2.5" width="15" height="9" fill="#e4f8fc" stroke="#b89848"/>
<rect x="0" y="0" width="16" height="3" fill="url(#ab)"/>
<rect x="7.5" y="5.5" width="8" height="7" fill="#fff" stroke="#888"/>
<rect x="9" y="9" width="1" height="2.5" fill="#1e8a1e"/><rect x="11" y="7.5" width="1" height="4" fill="#1e8a1e"/><rect x="13" y="8.5" width="1" height="3" fill="#1e8a1e"/>
</svg>
<div class="t" style="left:28.00px;top:506px;font-size:11px;font-weight:400;letter-spacing:-0.138px;color:#000;">Analysis</div>
<svg style="left:74px;top:511px;" width="10" height="10" viewBox="0 0 10 10"><path d="M0.5 0.5 H3.5 L5 2 L6.5 0.5 H9.5 V3.5 L8 5 L9.5 6.5 V9.5 H6.5 L5 8 L3.5 9.5 H0.5 V6.5 L2 5 L0.5 3.5 Z" fill="#fff" stroke="#000" stroke-width="1.25" stroke-linejoin="round"/></svg>
<svg style="left:96px;top:510px;" width="16" height="12" viewBox="0 0 16 12">
<defs><linearGradient id="tb" x1="0" y1="0" x2="1" y2="0"><stop offset="0" stop-color="#8cb4dc"/><stop offset="1" stop-color="#eef2fa"/></linearGradient></defs>
<rect x="0" y="0" width="16" height="3" fill="url(#tb)"/>
<rect x="0.5" y="3" width="15" height="8.5" fill="#d2d0cc" stroke="#d8b890"/>
<g fill="#80f860"><rect x="1" y="4" width="2" height="2"/><rect x="4" y="4" width="2" height="2"/><rect x="7" y="4" width="2" height="2"/><rect x="10" y="4" width="2" height="2"/><rect x="13" y="4" width="2" height="2"/><rect x="1" y="7" width="2" height="2"/><rect x="4" y="7" width="2" height="2"/><rect x="7" y="7" width="2" height="2"/><rect x="10" y="7" width="2" height="2"/><rect x="13" y="7" width="2" height="2"/><rect x="1" y="9.5" width="2" height="2"/><rect x="4" y="9.5" width="2" height="2"/><rect x="7" y="9.5" width="2" height="2"/><rect x="10" y="9.5" width="2" height="2"/><rect x="13" y="9.5" width="2" height="2"/></g>
</svg>
<div class="t" style="left:117.00px;top:506px;font-size:11px;font-weight:400;letter-spacing:-0.123px;color:#7a7a7a;">GPU Details</div>
<svg style="left:184px;top:510px;" width="16" height="12" viewBox="0 0 16 12">
<rect x="0" y="0" width="16" height="3" fill="url(#tb)"/>
<rect x="0.5" y="3" width="15" height="8.5" fill="#d2d0cc" stroke="#d8b890"/>
<g fill="#a8ecfa"><rect x="1" y="3.5" width="4" height="3.5"/><rect x="6" y="3.5" width="4" height="3.5"/><rect x="11" y="3.5" width="4" height="3.5"/><rect x="1" y="7.5" width="4" height="3.5"/><rect x="6" y="7.5" width="4" height="3.5"/><rect x="11" y="7.5" width="4" height="3.5"/></g>
</svg>
<div class="t" style="left:205.00px;top:506px;font-size:11px;font-weight:400;letter-spacing:-0.021px;color:#7a7a7a;">CPU Details</div>
<svg style="left:274px;top:509px;" width="14" height="14" viewBox="0 0 14 14">
<rect x="0.5" y="0.5" width="12" height="10" fill="#eef4fc" stroke="#8aaad8" stroke-width="1.2"/>
<rect x="3" y="4" width="5" height="1" fill="#7a9ad0"/><rect x="3" y="6" width="7" height="1" fill="#7a9ad0"/>
<rect x="5" y="11" width="3" height="1" fill="#8aaad8"/><rect x="1" y="12" width="11" height="1.5" fill="#9ab8e0"/>
</svg>
<div class="t" style="left:293.00px;top:506px;font-size:11px;font-weight:400;letter-spacing:-0.143px;color:#7a7a7a;">Console</div>
<svg style="left:340px;top:510px;" width="16" height="13" viewBox="0 0 16 13">
<rect x="0" y="0" width="16" height="2" fill="url(#tb)"/>
<rect x="0.5" y="2" width="15" height="8.5" fill="#f4f9fc" stroke="#c8b890"/>
<rect x="9.5" y="5.5" width="6" height="7" fill="#fff" stroke="#a0a0a0"/>
<rect x="11" y="7" width="1" height="4" fill="#8ab0d0"/><rect x="13" y="7" width="1" height="4" fill="#60c060"/>
</svg>
<div class="t" style="left:361.00px;top:506px;font-size:11px;font-weight:400;letter-spacing:0.093px;color:#7a7a7a;">Settings</div>
<svg style="left:816px;top:512px;" width="14" height="9" viewBox="0 0 14 9"><path d="M0.5 1.5 L2 0.5 L8 6 L8.5 8.5 L6 8 Z" fill="#e8c070" stroke="#8a6a30" stroke-width="0.8"/><rect x="10" y="7" width="2" height="2" fill="#000"/><rect x="13" y="7" width="2" height="2" fill="#000"/></svg>
<div style="left:844px;top:511px;width:10px;height:4px;background:#fff;border:1px solid #000;border-radius:1px"></div>
<div style="left:870px;top:511px;width:10px;height:10px;background:#fff;border:1px solid #000;border-radius:1px"></div>
<div style="left:872px;top:513px;width:6px;height:1px;background:#000"></div>
<div style="left:6px;top:534px;width:25px;height:25px;background:#c0bdb8;border-top:2px solid #000;border-left:2px solid #000"></div>
<svg style="left:12px;top:540px;" width="14" height="14" viewBox="0 0 14 14"><rect x="0.5" y="0.5" width="13" height="13" fill="#f2fbfb" stroke="#c8b070"/>
<g fill="#2a8a3a"><rect x="2" y="2" width="2" height="2"/><rect x="2" y="6" width="2" height="2"/><rect x="2" y="10" width="2" height="2"/></g>
<g fill="#3a4a5a"><rect x="5" y="3" width="6" height="1"/><rect x="5" y="7" width="6" height="1"/><rect x="5" y="11" width="6" height="1"/></g></svg>
<svg style="left:38px;top:540px;" width="14" height="14" viewBox="0 0 14 14"><rect x="0.5" y="0.5" width="13" height="13" fill="#f2fbfb" stroke="#b8a880"/>
<g fill="#2a8a3a"><rect x="2" y="2" width="2" height="2"/><rect x="2" y="6" width="2" height="2"/><rect x="2" y="10" width="2" height="2"/></g>
<g fill="#3a4a5a"><rect x="5" y="3" width="6" height="1"/><rect x="5" y="7" width="6" height="1"/><rect x="5" y="11" width="6" height="1"/></g></svg>
<svg style="left:65px;top:540px;" width="13" height="14" viewBox="0 0 13 14"><path d="M6.5 0.5 L12.5 6.5 L9 6.5 L9 13 L4 13 L4 6.5 L0.5 6.5 Z" fill="#f8dc80" stroke="#c89018" stroke-width="1"/></svg>
<div style="left:89px;top:532px;width:1px;height:29px;background:#a09a92"></div>
<div style="left:90px;top:532px;width:1px;height:29px;background:#fff"></div>
<div style="left:97px;top:533px;width:130px;height:29px;background:#fff;border-top:1px solid #d8d4cc;border-left:1px solid #e8e4dc;border-bottom:2px solid #000"></div>
<svg style="left:103px;top:539px;" width="17" height="16" viewBox="0 0 17 16">
<defs><pattern id="chk" width="2" height="2" patternUnits="userSpaceOnUse"><rect x="0" y="0" width="1" height="1" fill="#5a5a5a"/><rect x="1" y="1" width="1" height="1" fill="#5a5a5a"/></pattern>
<pattern id="chk2" width="2" height="2" patternUnits="userSpaceOnUse"><rect x="0" y="0" width="1" height="1" fill="#1e2a1e"/><rect x="1" y="1" width="1" height="1" fill="#1e2a1e"/></pattern></defs>
<rect x="0" y="0" width="14" height="14" fill="url(#chk)" opacity="0.55"/>
<rect x="0" y="0" width="14" height="2" fill="url(#chk)" opacity="0.9"/>
<rect x="3" y="7" width="2" height="6" fill="url(#chk2)"/><rect x="6" y="3" width="2" height="10" fill="url(#chk2)"/><rect x="9" y="5" width="3" height="8" fill="url(#chk2)"/>
<path d="M11 9 L15 12.5 L11 16 Z" fill="url(#chk2)"/>
</svg>
<div class="t" style="left:122.50px;top:536px;font-size:11px;font-weight:400;letter-spacing:0.061px;color:#707070;">Export PDF Report</div>
<div style="left:6px;top:562px;width:221px;height:26px;background:#7899c6;border-top:1px solid #5a6f94;border-bottom:1px solid #44587a"></div>
<div class="t" style="left:12.50px;top:566px;font-size:11px;font-weight:700;letter-spacing:0.258px;color:#0c1830;-webkit-text-stroke:0.3px #0c1830">1. CUDA Application Analysis</div>
<div class="t" style="left:11.00px;top:588px;font-size:9.6px;font-weight:400;letter-spacing:0.518px;color:#000;">The guided analysis system walks you</div>
<div class="t" style="left:11.00px;top:598px;font-size:9.6px;font-weight:400;letter-spacing:0.641px;color:#000;">through the various analysis stages to help</div>
<div class="t" style="left:11.00px;top:608px;font-size:9.6px;font-weight:400;letter-spacing:0.777px;color:#000;">you understand the optimization</div>
<div class="t" style="left:11.00px;top:618px;font-size:9.6px;font-weight:400;letter-spacing:0.678px;color:#000;">opportunities in your application. Once you</div>
<div class="t" style="left:11.00px;top:628px;font-size:9.6px;font-weight:400;letter-spacing:0.797px;color:#000;">become familiar with the optimization</div>
<div class="t" style="left:11.00px;top:638px;font-size:9.6px;font-weight:400;letter-spacing:0.657px;color:#000;">process, you can explore the individual</div>
<div class="t" style="left:11.00px;top:648px;font-size:9.6px;font-weight:400;letter-spacing:0.538px;color:#000;">analysis stages in an unguided mode. When</div>
<div class="t" style="left:11.00px;top:658px;font-size:9.6px;font-weight:400;letter-spacing:0.822px;color:#000;">optimizing your application it is important</div>
<div class="t" style="left:11.00px;top:668px;font-size:9.6px;font-weight:400;letter-spacing:0.761px;color:#000;">to fully utilize the compute and data</div>
<div class="t" style="left:11.00px;top:678px;font-size:9.6px;font-weight:400;letter-spacing:0.556px;color:#000;">movement capabilities of the GPU. To do</div>
<div class="t" style="left:11.00px;top:688px;font-size:9.6px;font-weight:400;letter-spacing:0.655px;color:#000;">this you should look at your application&#x27;s</div>
<div class="t" style="left:11.00px;top:698px;font-size:9.6px;font-weight:400;letter-spacing:0.506px;color:#000;">overall GPU usage as well as the</div>
<div class="t" style="left:11.00px;top:708px;font-size:9.6px;font-weight:400;letter-spacing:0.647px;color:#000;">performance of individual kernels.</div>
<div style="left:11px;top:728px;width:216px;height:1px;background:#b4b4b4"></div>
<div style="left:11px;top:735px;width:216px;height:28px;background:#fff;border-top:1px solid #fafafa;border-right:1px solid #c8c6c0;border-bottom:2px solid #000"></div>
<svg style="left:58px;top:741px;" width="17" height="16" viewBox="0 0 17 16">
<rect x="0.5" y="0.5" width="13" height="13" fill="#f4f8fc" stroke="#9aa890"/>
<g fill="#1e7a1e"><rect x="3" y="7" width="2" height="5"/><rect x="6" y="3" width="2" height="9"/><rect x="9" y="5" width="2" height="7"/></g>
<path d="M11 9 L16 12 L11 15 Z" fill="#3cb82a" stroke="#1f7a12" stroke-width="0.8"/>
</svg>
<div class="t" style="left:78.50px;top:738px;font-size:11px;font-weight:400;letter-spacing:-0.034px;color:#000;">Examine GPU Usage</div>
<div class="t" style="left:11.50px;top:762px;font-size:9px;font-weight:400;letter-spacing:0.022px;color:#000;">Determine your application&#x27;s overall GPU usage. This</div>
<div class="t" style="left:11.50px;top:771px;font-size:9px;font-weight:400;letter-spacing:0.075px;color:#000;">analysis requires an application timeline, so your</div>
<div class="t" style="left:11.50px;top:780px;font-size:9px;font-weight:400;letter-spacing:0.133px;color:#000;">application will be run once to collect it if it is not</div>
<div style="left:230px;top:538px;width:662px;height:256px;border:1px solid #9d978c;border-right:1px solid #8a8478"></div>
<div style="left:234px;top:532px;width:38px;height:12px;background:#fff"></div>
<div class="t" style="left:235.00px;top:527px;font-size:11px;font-weight:400;letter-spacing:-0.115px;color:#000;">Results</div>
<div style="left:232px;top:543px;width:659px;height:250px;background:#dcdad5"></div>
<div style="left:900px;top:501px;width:297px;height:297px;background:#fff;border-radius:7px 7px 6px 6px"></div>
<div style="left:900px;top:501px;width:98px;height:28px;background:linear-gradient(#e2e3ea,#ffffff);border-radius:7px 7px 0 0;border:1px solid #d4d4dc;border-bottom:none"></div>
<svg style="left:907px;top:510px;" width="14" height="12" viewBox="0 0 14 12">
<rect x="0.5" y="0.5" width="13" height="11" fill="#eef4fb" stroke="#6a86b0"/>
<rect x="1" y="1" width="12" height="2" fill="#9ab4d8"/>
<g fill="#8aa4c8"><rect x="1" y="5" width="12" height="1"/><rect x="1" y="7.5" width="12" height="1"/><rect x="1" y="10" width="12" height="1"/><rect x="5" y="3" width="1" height="8"/></g>
</svg>
<div class="t" style="left:925.00px;top:506px;font-size:11px;font-weight:400;letter-spacing:0.095px;color:#000;">Properties</div>
<svg style="left:982px;top:511px;" width="10" height="10" viewBox="0 0 10 10"><path d="M0.5 0.5 H3.5 L5 2 L6.5 0.5 H9.5 V3.5 L8 5 L9.5 6.5 V9.5 H6.5 L5 8 L3.5 9.5 H0.5 V6.5 L2 5 L0.5 3.5 Z" fill="#fff" stroke="#000" stroke-width="1.25" stroke-linejoin="round"/></svg>
<div style="left:1146px;top:511px;width:10px;height:4px;background:#fff;border:1px solid #000;border-radius:1px"></div>
<div style="left:1172px;top:511px;width:10px;height:10px;background:#fff;border:1px solid #000;border-radius:1px"></div>
<div style="left:1174px;top:513px;width:6px;height:1px;background:#000"></div>
<div class="t" style="left:903.50px;top:548px;font-size:11px;font-weight:400;letter-spacing:-0.024px;color:#000;">Select or highlight a single interval to see properties</div>
<div style="left:903px;top:569px;width:291px;height:225px;background:#fff;border:1px solid #9d978c"></div>
</body></html>
